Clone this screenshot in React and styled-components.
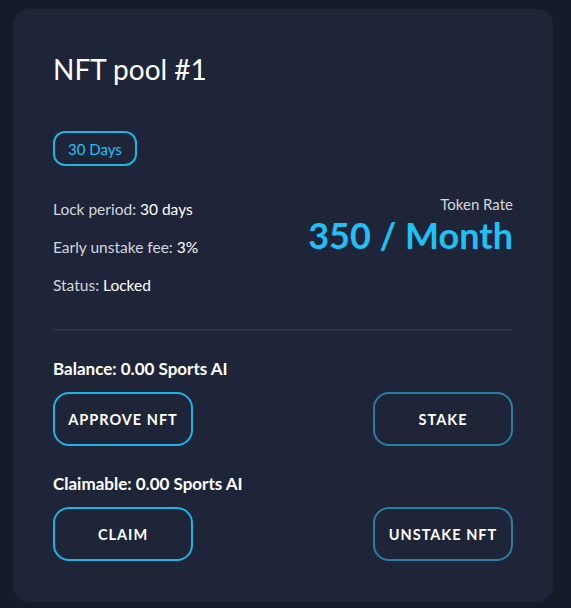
import React from "react";
import styled, { createGlobalStyle } from "styled-components";

const GlobalStyle = createGlobalStyle`
  html, body {
    margin: 0;
    padding: 0;
    background: #161b2a;
    font-family: Lato, "Noto Sans", sans-serif;
  }
`;

const Page = styled.div`
  padding: 9px 18px 7px 13px;
`;

const Card = styled.div`
  background: #1f2538;
  border-radius: 16px;
  padding: 40px 40px 41px 40px;
  color: #ffffff;
`;

const Title = styled.h2`
  margin: 0;
  font-size: 28px;
  font-weight: 400;
  line-height: 40px;
  height: 40px;
  color: #ffffff;
`;

const Badge = styled.div`
  display: inline-flex;
  align-items: center;
  justify-content: center;
  margin-top: 42px;
  height: 35px;
  padding: 0 13px;
  box-sizing: border-box;
  border: 2px solid #1eb4e6;
  border-radius: 12px;
  color: #1ec0f5;
  font-size: 15px;
`;

const InfoRow = styled.div`
  display: flex;
  justify-content: space-between;
  margin-top: 34px;
  padding-bottom: 34px;
  border-bottom: 2px solid #2b3246;
`;

const Details = styled.div`
  display: flex;
  flex-direction: column;
  gap: 19px;
`;

const Line = styled.div`
  font-size: 15.5px;
  line-height: 19px;
  color: #d4d7de;

  b {
    font-weight: 400;
    color: #ffffff;
  }
`;

const Rate = styled.div`
  display: flex;
  flex-direction: column;
  align-items: flex-end;
`;

const RateLabel = styled.div`
  font-size: 15px;
  color: #d4d7de;
  line-height: 18px;
  margin-top: -5px;
`;

const RateValue = styled.div`
  font-size: 36px;
  font-weight: 700;
  color: #1ec0f5;
  line-height: 44px;
`;

const Section = styled.div`
  margin-top: ${(p) => p.$top}px;
`;

const Label = styled.div`
  font-size: 17px;
  font-weight: 700;
  line-height: 20px;
  color: #ffffff;
`;

const Buttons = styled.div`
  display: flex;
  justify-content: space-between;
  margin-top: 13px;
`;

const Button = styled.button`
  width: 140px;
  height: 54px;
  box-sizing: border-box;
  background: transparent;
  border: 2px solid ${(p) => (p.$dim ? "#2a7fa0" : "#1eb4e6")};
  border-radius: 16px;
  color: #ffffff;
  font-family: inherit;
  font-size: 14.5px;
  font-weight: 700;
  letter-spacing: 1px;
  cursor: pointer;
`;

export default function App() {
  return (
    <>
      <GlobalStyle />
      <Page>
        <Card>
          <Title>NFT pool #1</Title>
          <Badge>30 Days</Badge>
          <InfoRow>
            <Details>
              <Line>
                Lock period: <b>30 days</b>
              </Line>
              <Line>
                Early unstake fee: <b>3%</b>
              </Line>
              <Line>
                Status: <b>Locked</b>
              </Line>
            </Details>
            <Rate>
              <RateLabel>Token Rate</RateLabel>
              <RateValue>350 / Month</RateValue>
            </Rate>
          </InfoRow>
          <Section $top={28}>
            <Label>Balance: 0.00 Sports AI</Label>
            <Buttons>
              <Button>APPROVE NFT</Button>
              <Button $dim>STAKE</Button>
            </Buttons>
          </Section>
          <Section $top={28}>
            <Label>Claimable: 0.00 Sports AI</Label>
            <Buttons>
              <Button>CLAIM</Button>
              <Button $dim>UNSTAKE NFT</Button>
            </Buttons>
          </Section>
        </Card>
      </Page>
    </>
  );
}
